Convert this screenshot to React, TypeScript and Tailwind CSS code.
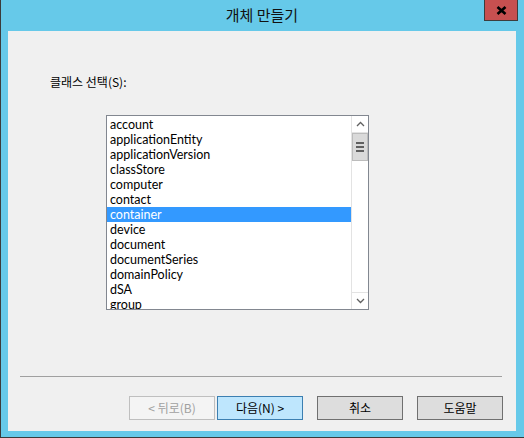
const CLASSES = [
  "account",
  "applicationEntity",
  "applicationVersion",
  "classStore",
  "computer",
  "contact",
  "container",
  "device",
  "document",
  "documentSeries",
  "domainPolicy",
  "dSA",
  "group",
];

const SELECTED = "container";

function CloseGlyph() {
  return (
    <svg width="11" height="9" viewBox="0 0 11 9">
      <path d="M1.5 1 L9.5 8 M9.5 1 L1.5 8" stroke="#000" strokeWidth="2.6" strokeLinecap="butt" />
    </svg>
  );
}

function Scrollbar() {
  return (
    <div className="w-[17px] h-full flex flex-col bg-white border-l border-[#e3e3e3]">
      {/* Up */}
      <div className="h-[17px] flex items-center justify-center border-b border-[#e3e3e3]">
        <svg width="9" height="6" viewBox="0 0 9 6">
          <path d="M1 5 L4.5 1.5 L8 5" fill="none" stroke="#606060" strokeWidth="1.3" />
        </svg>
      </div>
      {/* Thumb */}
      <div className="h-[28px] bg-[#dadada] border border-[#bcbcbc] flex flex-col items-center justify-center gap-[2px]">
        <div className="w-[8px] h-[2px] bg-[#606060]" />
        <div className="w-[8px] h-[2px] bg-[#606060]" />
        <div className="w-[8px] h-[2px] bg-[#606060]" />
      </div>
      <div className="flex-1" />
      {/* Down */}
      <div className="h-[17px] flex items-center justify-center border-t border-[#e3e3e3]">
        <svg width="9" height="6" viewBox="0 0 9 6">
          <path d="M1 1 L4.5 4.5 L8 1" fill="none" stroke="#606060" strokeWidth="1.3" />
        </svg>
      </div>
    </div>
  );
}

function Button({ label, kind }: { label: string; kind: "disabled" | "default" | "normal" }) {
  const cls =
    kind === "disabled"
      ? "border-[#bfbfbf] bg-[#f4f4f4] text-[#a0a0a0]"
      : kind === "default"
      ? "border-[#3c7fb1] bg-[#bee6fd] text-[#000]"
      : "border-[#707070] bg-[#dddddd] text-[#000]";
  return (
    <div className={`w-[86px] h-[24px] border flex items-center justify-center text-[12px] ${cls}`}>
      {label}
    </div>
  );
}

export default function App() {
  return (
    <div
      className="w-[524px] h-[438px] bg-[#66c9e9] border-l border-b border-[#3b3b3b] flex flex-col pl-[7px] pr-[8px] pb-[6px] overflow-hidden"
      style={{ fontFamily: '"Noto Sans", "Noto Sans CJK KR", sans-serif' }}
    >
      {/* Title bar */}
      <div className="h-[31px] relative flex items-center justify-center shrink-0">
        <span
          className="text-[15px] text-[#111] pb-[1px]"
          style={{ fontFamily: '"Noto Sans CJK KR", sans-serif' }}
        >
          개체 만들기
        </span>
        <div className="absolute top-0 right-[-2px] w-[34px] h-[21px] bg-[#c75050] border border-[#3d3d3d] border-t-0 flex items-center justify-center">
          <CloseGlyph />
        </div>
      </div>

      {/* Client area */}
      <div className="flex-1 bg-[#f0f0f0] flex flex-col text-[12px] text-black">
        <div
          className="ml-[42px] mt-[43px] leading-[16px]"
          style={{ fontFamily: '"Noto Sans CJK KR", sans-serif' }}
        >
          클래스 선택(S):
        </div>

        {/* List box */}
        <div className="ml-[98px] mt-[25px] w-[263px] h-[195px] border border-[#828790] bg-white flex">
          <div
            className="flex-1 pt-[1px] overflow-hidden text-[12.5px]"
            style={{ fontFamily: 'Lato, "Noto Sans", sans-serif' }}
          >
            {CLASSES.map((c) => (
              <div
                key={c}
                className={`h-[15px] leading-[15px] pl-[3px] whitespace-nowrap ${
                  c === SELECTED ? "bg-[#3399ff] text-white" : "text-black"
                }`}
              >
                {c}
              </div>
            ))}
          </div>
          <Scrollbar />
        </div>

        {/* Separator */}
        <div className="ml-[12px] mt-[66px] w-[482px] h-px bg-[#a0a0a0]" />

        {/* Buttons */}
        <div
          className="mt-[19px] ml-[121px] flex"
          style={{ fontFamily: '"Noto Sans CJK KR", sans-serif' }}
        >
          <Button label="< 뒤로(B)" kind="disabled" />
          <div className="ml-[2px]">
            <Button label="다음(N) >" kind="default" />
          </div>
          <div className="ml-[14px]">
            <Button label="취소" kind="normal" />
          </div>
          <div className="ml-[14px]">
            <Button label="도움말" kind="normal" />
          </div>
        </div>
      </div>
    </div>
  );
}
